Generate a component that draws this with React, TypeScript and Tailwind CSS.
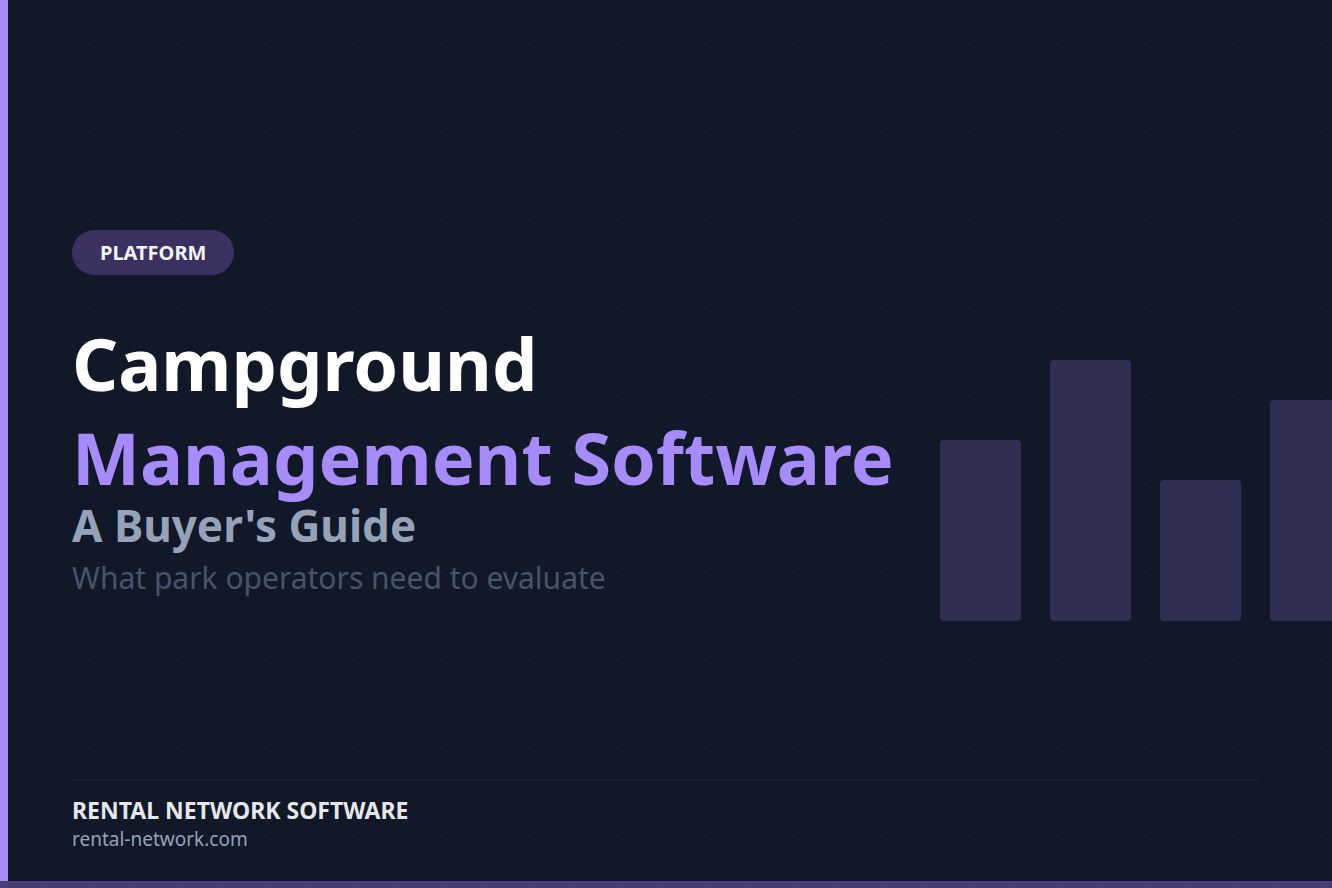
export default function App() {
  return (
    <div className="relative w-[1332px] h-[888px] overflow-hidden bg-[#111827] font-['Liberation_Sans']"
      style={{ backgroundImage: "radial-gradient(circle, rgba(255,255,255,0.035) 1.5px, transparent 1.6px)", backgroundSize: "44px 44px", backgroundPosition: "23px -22px" }}>
      <div className="absolute left-0 top-0 bottom-0 w-[8px] bg-[#a78bfa]" />
      <div className="absolute left-0 right-0 bottom-0 h-[7px] bg-[#4a3d74]" />
      <div className="absolute right-0 top-[360px] flex items-end gap-[29px] h-[261px]">
        <div className="w-[81px] h-[181px] rounded-[4px] bg-[#312e54]" />
        <div className="w-[81px] h-[261px] rounded-[4px] bg-[#312e54]" />
        <div className="w-[81px] h-[141px] rounded-[4px] bg-[#312e54]" />
        <div className="w-[62px] h-[221px] rounded-l-[4px] bg-[#312e54]" />
      </div>
      <div className="relative flex flex-col h-full pl-[72px] pr-[72px]">
        <div className="pt-[230px]">
          <span className="inline-flex items-center h-[45px] px-[28px] rounded-full bg-[#3b3160] text-[#f3f4f6] text-[20px] font-bold">PLATFORM</span>
        </div>
        <div className="mt-[41px] text-white text-[72px] font-bold leading-[95px]">Campground</div>
        <div className="text-[#a78bfa] text-[72px] font-bold leading-[95px] -mt-[1px]">Management Software</div>
        <div className="text-[#94a3b8] text-[44px] font-bold leading-[52px] -mt-[6px]">A Buyer's Guide</div>
        <div className="text-[#475569] text-[30px] leading-[40px] mt-[7px]">What park operators need to evaluate</div>
        <div className="mt-auto mb-[36px]">
          <div className="h-px bg-[#1c1f28] mb-[14px]" />
          <div className="text-[#e5e7eb] text-[23px] font-bold leading-[30px]">RENTAL NETWORK SOFTWARE</div>
          <div className="text-[#94a3b8] text-[19px] leading-[26px] mt-[1px]">rental-network.com</div>
        </div>
      </div>
    </div>
  );
}
